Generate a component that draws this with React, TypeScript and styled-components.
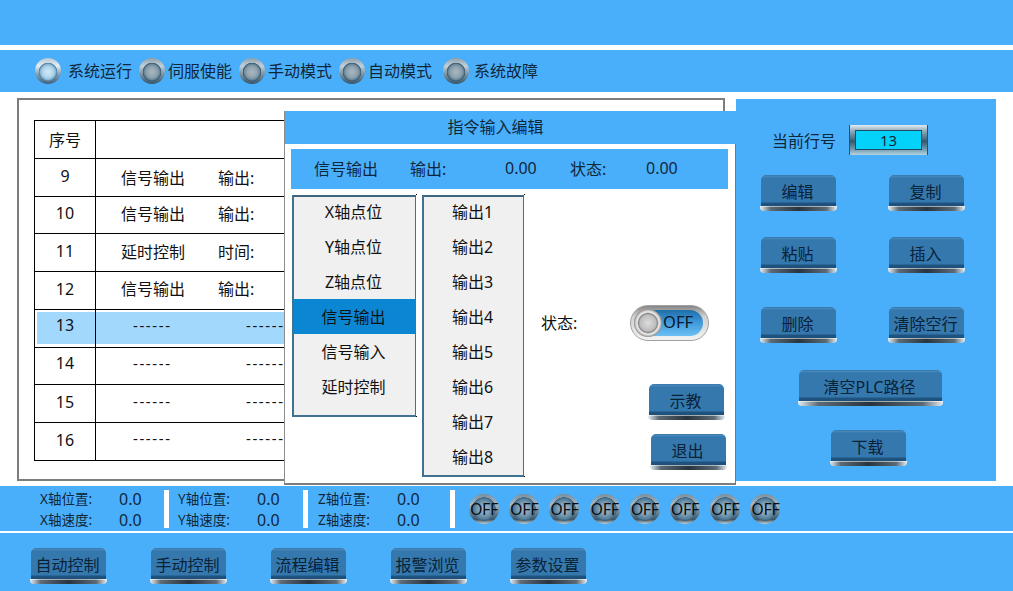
import React from 'react';
import styled, { createGlobalStyle } from 'styled-components';

const BLUE = '#4aaffb';
const FONT = `"Noto Sans", "Noto Sans CJK SC", sans-serif`;

const GlobalStyle = createGlobalStyle`
  html, body {
    margin: 0;
    padding: 0;
    background: #fff;
    overflow: hidden;
  }
  * {
    box-sizing: border-box;
  }
  body {
    font-family: ${FONT};
    color: #111;
  }
`;

const Page = styled.div`
  position: relative;
  width: 1013px;
  height: 591px;
  display: flex;
  flex-direction: column;
  overflow: hidden;
  background: #fff;
`;

const TopBar = styled.div`
  height: 45px;
  background: ${BLUE};
  flex-shrink: 0;
`;

const StatusBar = styled.div`
  height: 42px;
  margin-top: 5px;
  padding-left: 35px;
  display: flex;
  align-items: center;
  gap: 7px;
  background: ${BLUE};
  flex-shrink: 0;
`;

const StatusItem = styled.div<{ $gap: number; $left?: number }>`
  display: flex;
  align-items: center;
  gap: ${(p) => p.$gap}px;
  margin-left: ${(p) => p.$left ?? 0}px;
  font-size: 16px;
  line-height: 20px;
  color: #10273a;
`;

const Lamp = styled.span<{ $on?: boolean }>`
  display: block;
  width: 26px;
  height: 26px;
  border-radius: 50%;
  background: ${(p) =>
    p.$on
      ? 'radial-gradient(circle at 50% 54%, #d3e8f4 0, #b3d8ee 5px, #8dbbd8 7.5px, #4d7b99 9px, transparent 9.6px), linear-gradient(180deg, #b9c8d2 0, #e3edf3 30%, #86a6ba 60%, #3f6179 100%)'
      : 'radial-gradient(circle at 50% 54%, #a9b7c0 0, #93a5b0 5px, #6f8b9d 7.5px, #355a73 9px, transparent 9.6px), linear-gradient(180deg, #8e9ea9 0, #c4d0d8 30%, #7f98a8 60%, #38566b 100%)'};
`;

const Main = styled.div`
  height: 383px;
  margin-top: 6px;
  padding: 0 17px;
  display: flex;
  gap: 11px;
  flex-shrink: 0;
`;

const TablePanel = styled.div`
  width: 708px;
  height: 383px;
  padding: 20px 15px 0;
  border: 2px solid #7d7d7d;
  background: #fff;
`;

const GridTable = styled.div`
  border-top: 1px solid #000;
  border-left: 1px solid #000;
  width: 660px;
`;

const Row = styled.div<{ $active?: boolean }>`
  display: grid;
  grid-template-columns: 60px 1fr;
  height: 37.75px;
  border-bottom: 1px solid #000;
  font-size: 16px;
  background: ${(p) => (p.$active ? '#a3d8fd' : '#fff')};
  box-shadow: ${(p) => (p.$active ? 'inset 2px 2px 0 #fff, inset 0 -3px 0 #fff' : 'none')};
`;

const NumCell = styled.div<{ $lift?: number }>`
  display: flex;
  align-items: center;
  justify-content: center;
  padding-bottom: ${(p) => p.$lift ?? 3}px;
  font-size: 16px;
`;

const BodyCell = styled.div<{ $lift?: number }>`
  display: flex;
  align-items: center;
  padding-bottom: ${(p) => p.$lift ?? 4}px;
  border-left: 1px solid #000;
  font-size: 16px;
`;

const CmdName = styled.span`
  width: 97px;
  margin-left: 25px;
`;

const DashCell = styled.span`
  width: 113px;
  margin-left: 37px;
  padding-bottom: 2px;
  letter-spacing: 1.6px;
  font-size: 15px;

  & + & {
    margin-left: 0;
  }
`;

const SidePanel = styled.div`
  width: 260px;
  height: 382px;
  margin-top: 1px;
  padding: 26px 25px 0;
  display: flex;
  flex-direction: column;
  background: ${BLUE};
`;

const LineNoRow = styled.div`
  display: flex;
  align-items: center;
  padding-left: 11px;
  gap: 13px;
  font-size: 16px;
  color: #10273a;
`;

const LineNoFrame = styled.div`
  width: 79px;
  height: 30px;
  padding: 5px 6px;
  background: linear-gradient(180deg, #e3edf2 0, #8eaaba 20%, #34586f 55%, #6f98ad 80%, #b5d4e0 100%);
  box-shadow: inset 1px 0 0 #2f5168, inset -1px 0 0 #2f5168;
`;

const LineNoValue = styled.div`
  height: 20px;
  display: flex;
  align-items: center;
  justify-content: center;
  background: #04d2fb;
  border: 1px solid #1c4c66;
  font-size: 15px;
  color: #10273a;
`;

const BtnGrid = styled.div`
  margin-top: 20px;
  display: grid;
  grid-template-columns: 76px 76px;
  grid-template-rows: 62px 70px 63px;
  justify-content: space-between;
  padding-right: 6px;
`;

const CenterRow = styled.div<{ $top: number; $left: number }>`
  margin-top: ${(p) => p.$top}px;
  margin-left: ${(p) => p.$left}px;
`;

const Btn = styled.button<{ $w?: number }>`
  position: relative;
  display: block;
  width: ${(p) => p.$w ?? 75}px;
  height: 36px;
  padding: 0 2px 5px 0;
  border: 0;
  border-radius: 5px 5px 3px 3px;
  font-family: ${FONT};
  font-size: 16px;
  color: #0a2236;
  white-space: nowrap;
  background: linear-gradient(
    180deg,
    #2c6897 0,
    #4a8cc0 1px,
    #3578ae 3px,
    #3578ae calc(100% - 9px),
    #1f5480 calc(100% - 8px),
    #1d4f79 calc(100% - 5px),
    transparent calc(100% - 5px)
  );

  &::after {
    content: '';
    position: absolute;
    left: -1px;
    right: -1px;
    bottom: 0;
    height: 5px;
    border-radius: 0 0 4px 4px;
    background: linear-gradient(90deg, #e8eef2 0, #5b6a75 14%, #28343d 50%, #5b6a75 86%, #e8eef2 100%);
    box-shadow: inset 0 1px 0 rgba(255, 255, 255, 0.55);
  }
`;

const Dialog = styled.div`
  position: absolute;
  left: 284px;
  top: 111px;
  width: 452px;
  height: 374px;
  display: flex;
  flex-direction: column;
  background: #fff;
  border-left: 1px solid #8c8c8c;
  border-right: 1px solid #5d7f96;
  border-bottom: 2px solid #7d7d7d;
`;

const DialogTitle = styled.div`
  height: 33px;
  margin-right: -1px;
  padding: 0 30px 3px 0;
  display: flex;
  align-items: center;
  justify-content: center;
  background: ${BLUE};
  font-size: 16px;
  color: #10273a;
`;

const Summary = styled.div`
  height: 40px;
  margin: 5px 7px 0 6px;
  padding: 0 0 2px 23px;
  display: flex;
  align-items: center;
  background: ${BLUE};
  font-size: 16px;
  color: #10273a;
`;

const SummaryField = styled.span<{ $w: number }>`
  width: ${(p) => p.$w}px;
  flex-shrink: 0;
`;

const DialogBody = styled.div`
  margin-top: 6px;
  padding-left: 7px;
  display: flex;
  align-items: flex-start;
`;

const OptionList = styled.div<{ $w: number; $h: number; $left?: number }>`
  position: relative;
  width: ${(p) => p.$w}px;
  height: ${(p) => p.$h}px;
  margin-left: ${(p) => p.$left ?? 0}px;
  background: #f0f0f0;
  border: 1px solid #3f7391;
  border-left-width: 2px;
  border-top: 2px solid #3f6580;
  border-bottom-width: 2px;
  flex-shrink: 0;

  &::before,
  &::after {
    content: '';
    position: absolute;
    right: -2px;
    width: 1px;
    height: 1px;
    background: #000;
  }
  &::before {
    top: -3px;
  }
  &::after {
    bottom: -2px;
  }
`;

const Option = styled.div<{ $active?: boolean }>`
  height: 35px;
  margin-right: -1px;
  padding: 0 3px 1px 0;
  display: flex;
  align-items: center;
  justify-content: center;
  font-size: 16px;
  color: #111;
  background: ${(p) => (p.$active ? '#0a86d3' : 'transparent')};

  &:first-child {
    margin-top: -3px;
  }
`;

const ActionColumn = styled.div`
  flex: 1;
  height: 282px;
  display: flex;
  flex-direction: column;
`;

const StateRow = styled.div`
  margin-top: 110px;
  margin-left: 17px;
  display: flex;
  align-items: center;
  font-size: 16px;
`;

const StateLabel = styled.span`
  width: 89px;
  padding-bottom: 2px;
`;

const Toggle = styled.div`
  position: relative;
  width: 79px;
  height: 36px;
  padding: 4px 5px 4px 9px;
  border-radius: 18px;
  border: 1px solid #a0a0a0;
  background: linear-gradient(180deg, #858585 0, #cfcfcf 30%, #f3f3f3 100%);
`;

const ToggleTrack = styled.div`
  height: 100%;
  padding-left: 23px;
  padding-bottom: 3px;
  display: flex;
  align-items: center;
  border-radius: 14px;
  background: linear-gradient(180deg, #1f6fa9 0, #3c96d8 45%, #6cc0f3 100%);
  font-size: 16.5px;
  color: #08192a;
`;

const ToggleKnob = styled.span`
  position: absolute;
  left: 3px;
  top: 3px;
  width: 28px;
  height: 28px;
  border-radius: 50%;
  background: radial-gradient(circle at 50% 50%, #dcdcdc 0, #bdbdbd 8px, #8a8a8a 9.5px, #f2f2f2 11px, #c2c2c2 12.5px, #8c8c8c 14px);
`;

const InfoBar = styled.div`
  height: 45px;
  margin-top: 5px;
  padding: 4px 0 3px 40px;
  display: flex;
  align-items: stretch;
  background: ${BLUE};
  flex-shrink: 0;
`;

const AxisGroup = styled.div<{ $w: number }>`
  width: ${(p) => p.$w}px;
  padding-top: 1px;
  display: grid;
  grid-template-columns: 79px auto;
  align-content: center;
  align-items: center;
  row-gap: 0;
  line-height: 21px;
  font-size: 13.5px;
  color: #10273a;
`;

const AxisValue = styled.span`
  font-size: 16px;
`;

const Divider = styled.div<{ $right: number }>`
  width: 5px;
  margin-right: ${(p) => p.$right}px;
  background: #fff;
`;

const OffRow = styled.div`
  display: flex;
  align-items: center;
  gap: 10.2px;
  margin-bottom: 1px;
`;

const OffLamp = styled.span`
  width: 30px;
  height: 30px;
  display: flex;
  align-items: center;
  justify-content: center;
  border-radius: 50%;
  font-size: 16px;
  letter-spacing: -0.3px;
  color: #050d14;
  background:
    radial-gradient(circle at 50% 50%, #a3bac9 0, #7f9fb4 6px, #547e9a 10px, #3d6480 11.5px, transparent 12px),
    linear-gradient(180deg, #7a8e9b 0, #aab8c1 35%, #6f8796 60%, #3f5666 85%, #c9d2d7 100%);
`;

const NavBar = styled.div`
  height: 58px;
  margin-top: 2px;
  padding: 15px 0 0 31px;
  display: flex;
  gap: 45px;
  background: ${BLUE};
  flex-shrink: 0;
`;

const rows = [
  { n: 9, name: '信号输出', label: '输出:', bodyLift: 0 },
  { n: 10, name: '信号输出', label: '输出:' },
  { n: 11, name: '延时控制', label: '时间:' },
  { n: 12, name: '信号输出', label: '输出:' },
  { n: 13, active: true, numLift: 6 },
  { n: 14, numLift: 6 },
  { n: 15 },
  { n: 16 },
];

const statusItems = [
  { text: '系统运行', gap: 7, on: true },
  { text: '伺服使能', gap: 3 },
  { text: '手动模式', gap: 3 },
  { text: '自动模式', gap: 3 },
  { text: '系统故障', gap: 5, left: 4 },
];

const axes = [
  { axis: 'X', w: 124, right: 9 },
  { axis: 'Y', w: 125, right: 10 },
  { axis: 'Z', w: 132, right: 14 },
];

const commands = ['X轴点位', 'Y轴点位', 'Z轴点位', '信号输出', '信号输入', '延时控制'];
const outputs = ['输出1', '输出2', '输出3', '输出4', '输出5', '输出6', '输出7', '输出8'];
const navItems = ['自动控制', '手动控制', '流程编辑', '报警浏览', '参数设置'];

const App = () => {
  return (
    <Page>
      <GlobalStyle />
      <TopBar />
      <StatusBar>
        {statusItems.map((s) => (
          <StatusItem key={s.text} $gap={s.gap} $left={s.left}>
            <Lamp $on={s.on} />
            {s.text}
          </StatusItem>
        ))}
      </StatusBar>
      <Main>
        <TablePanel>
          <GridTable>
            <Row>
              <NumCell $lift={0}>序号</NumCell>
              <BodyCell />
            </Row>
            {rows.map((r) => (
              <Row key={r.n} $active={r.active}>
                <NumCell $lift={r.numLift}>{r.n}</NumCell>
                <BodyCell $lift={r.bodyLift}>
                  {r.name ? (
                    <>
                      <CmdName>{r.name}</CmdName>
                      <span>{r.label}</span>
                    </>
                  ) : (
                    <>
                      <DashCell>------</DashCell>
                      <DashCell>------</DashCell>
                    </>
                  )}
                </BodyCell>
              </Row>
            ))}
          </GridTable>
        </TablePanel>
        <SidePanel>
          <LineNoRow>
            当前行号
            <LineNoFrame>
              <LineNoValue>13</LineNoValue>
            </LineNoFrame>
          </LineNoRow>
          <BtnGrid>
            <Btn>编辑</Btn>
            <Btn>复制</Btn>
            <Btn>粘贴</Btn>
            <Btn>插入</Btn>
            <Btn>删除</Btn>
            <Btn>清除空行</Btn>
          </BtnGrid>
          <CenterRow $top={0} $left={38}>
            <Btn $w={143}>清空PLC路径</Btn>
          </CenterRow>
          <CenterRow $top={24} $left={70}>
            <Btn>下载</Btn>
          </CenterRow>
        </SidePanel>
      </Main>
      <InfoBar>
        {axes.map((a) => (
          <React.Fragment key={a.axis}>
            <AxisGroup $w={a.w}>
              <span>{a.axis}轴位置:</span>
              <AxisValue>0.0</AxisValue>
              <span>{a.axis}轴速度:</span>
              <AxisValue>0.0</AxisValue>
            </AxisGroup>
            <Divider $right={a.right} />
          </React.Fragment>
        ))}
        <OffRow>
          {Array.from({ length: 8 }, (_, i) => (
            <OffLamp key={i}>OFF</OffLamp>
          ))}
        </OffRow>
      </InfoBar>
      <NavBar>
        {navItems.map((n) => (
          <Btn key={n}>{n}</Btn>
        ))}
      </NavBar>
      <Dialog>
        <DialogTitle>指令输入编辑</DialogTitle>
        <Summary>
          <SummaryField $w={96}>信号输出</SummaryField>
          <SummaryField $w={95}>输出:</SummaryField>
          <SummaryField $w={65}>0.00</SummaryField>
          <SummaryField $w={76}>状态:</SummaryField>
          <SummaryField $w={40}>0.00</SummaryField>
        </Summary>
        <DialogBody>
          <OptionList $w={124} $h={222}>
            {commands.map((c) => (
              <Option key={c} $active={c === '信号输出'}>
                {c}
              </Option>
            ))}
          </OptionList>
          <OptionList $w={102} $h={282} $left={6}>
            {outputs.map((o) => (
              <Option key={o}>{o}</Option>
            ))}
          </OptionList>
          <ActionColumn>
            <StateRow>
              <StateLabel>状态:</StateLabel>
              <Toggle>
                <ToggleKnob />
                <ToggleTrack>OFF</ToggleTrack>
              </Toggle>
            </StateRow>
            <CenterRow $top={43} $left={125}>
              <Btn>示教</Btn>
            </CenterRow>
            <CenterRow $top={14} $left={127}>
              <Btn>退出</Btn>
            </CenterRow>
          </ActionColumn>
        </DialogBody>
      </Dialog>
    </Page>
  );
};

export default App;
